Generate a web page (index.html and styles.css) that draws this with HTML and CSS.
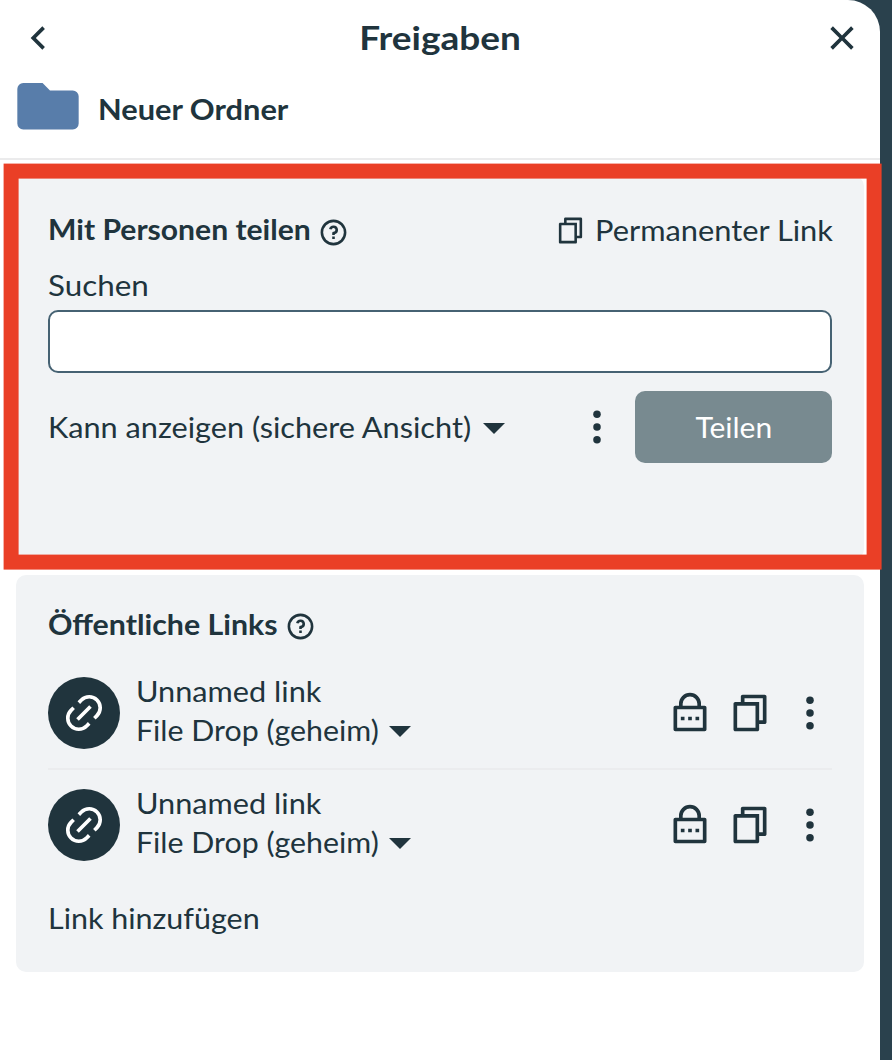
FILE: index.html
```html
<!DOCTYPE html>
<html lang="de">
<head>
<meta charset="utf-8">
<title>Freigaben</title>
<link rel="stylesheet" href="styles.css">
</head>
<body>
<svg class="symbols" aria-hidden="true">
  <symbol id="copy" viewBox="0 0 24 24"><path d="M7 6V3c0-.552.448-1 1-1h12c.552 0 1 .448 1 1v14c0 .552-.448 1-1 1h-3v3c0 .552-.45 1-1.007 1H4.007C3.451 22 3 21.552 3 21l.003-14c0-.552.45-1 1.006-1H7zM5.002 8L5 20h10V8H5.002zM9 6h8v10h2V4H9v2z"/></symbol>
  <symbol id="lock" viewBox="0 0 24 24"><path d="M18 8h2a1 1 0 0 1 1 1v12a1 1 0 0 1-1 1H4a1 1 0 0 1-1-1V9a1 1 0 0 1 1-1h2V7a6 6 0 1 1 12 0v1zM5 10v10h14V10H5zm6 4h2v2h-2v-2zm-4 0h2v2H7v-2zm8 0h2v2h-2v-2zm1-6V7a4 4 0 1 0-8 0v1h8z"/></symbol>
  <symbol id="more" viewBox="0 0 24 24"><circle cx="12" cy="5" r="2.05"/><circle cx="12" cy="12" r="2.05"/><circle cx="12" cy="19" r="2.05"/></symbol>
  <symbol id="help" viewBox="0 0 24 24"><path d="M12 22C6.477 22 2 17.523 2 12S6.477 2 12 2s10 4.477 10 10-4.477 10-10 10zm0-2a8 8 0 1 0 0-16 8 8 0 0 0 0 16zm-1-5h2v2h-2v-2zm2-1.645V14h-2v-1.5a1 1 0 0 1 1-1 1.5 1.5 0 1 0-1.471-1.794l-1.962-.393A3.501 3.501 0 1 1 13 13.355z"/></symbol>
  <symbol id="link" viewBox="0 0 24 24"><path d="M18.364 15.536L16.95 14.12l1.414-1.414a5 5 0 1 0-7.071-7.071L9.879 7.05 8.464 5.636 9.88 4.222a7 7 0 0 1 9.9 9.9l-1.415 1.414zm-2.828 2.828l-1.415 1.414a7 7 0 0 1-9.9-9.9l1.415-1.414L7.05 9.88l-1.414 1.414a5 5 0 1 0 7.071 7.071l1.414-1.414 1.415 1.414zm-.708-10.607l1.415 1.415-7.071 7.07-1.415-1.414 7.071-7.07z"/></symbol>
  <symbol id="back" viewBox="0 0 24 24"><path d="M10.828 12l4.95 4.95-1.414 1.414L8 12l6.364-6.364 1.414 1.414z"/></symbol>
  <symbol id="close" viewBox="0 0 24 24"><path d="M12 10.587l4.95-4.95 1.414 1.414-4.95 4.95 4.95 4.95-1.414 1.414-4.95-4.95-4.95 4.95-1.414-1.414 4.95-4.95-4.95-4.95L7.05 5.637z"/></symbol>
  <symbol id="caret" viewBox="0 0 22 11"><path d="M0 0h22L11 11z"/></symbol>
</svg>
<main class="panel">
  <header class="header">
    <svg class="icon"><use href="#back"/></svg>
    <h1 class="title"><span class="wide t-title">Freigaben</span></h1>
    <svg class="icon"><use href="#close"/></svg>
  </header>
  <div class="resource">
    <svg class="folder" viewBox="0 0 62 47"><path d="M6 0H25.5L33 7.5H56a6 6 0 0 1 6 6V41a6 6 0 0 1-6 6H6a6 6 0 0 1-6-6V6a6 6 0 0 1 6-6z"/></svg>
    <span class="name wide t-name">Neuer Ordner</span>
  </div>

  <section class="card people">
    <div class="card-head">
      <h2 class="heading"><span class="wide t-people">Mit Personen teilen</span><svg class="icon-small"><use href="#help"/></svg></h2>
      <a class="permalink"><svg class="icon-small"><use href="#copy"/></svg><span class="wide t-perma">Permanenter Link</span></a>
    </div>
    <label class="label" for="search"><span class="wide t-search">Suchen</span></label>
    <input class="search" id="search" type="text">
    <div class="share-row">
      <span class="role"><span class="wide t-role">Kann anzeigen (sichere Ansicht)</span><svg class="caret"><use href="#caret"/></svg></span>
      <svg class="icon"><use href="#more"/></svg>
      <button class="share"><span class="wide t-share">Teilen</span></button>
    </div>
  </section>

  <section class="card links">
    <h2 class="heading"><span class="wide t-public">Öffentliche Links</span><svg class="icon-small"><use href="#help"/></svg></h2>
    <ul class="list">
      <li class="item">
        <span class="avatar"><svg class="icon"><use href="#link"/></svg></span>
        <div class="info">
          <span class="wide t-unnamed">Unnamed link</span>
          <span class="role"><span class="wide t-drop">File Drop (geheim)</span><svg class="caret"><use href="#caret"/></svg></span>
        </div>
        <div class="actions"><svg class="icon"><use href="#lock"/></svg><svg class="icon"><use href="#copy"/></svg><svg class="icon"><use href="#more"/></svg></div>
      </li>
      <li class="item">
        <span class="avatar"><svg class="icon"><use href="#link"/></svg></span>
        <div class="info">
          <span class="wide t-unnamed">Unnamed link</span>
          <span class="role"><span class="wide t-drop">File Drop (geheim)</span><svg class="caret"><use href="#caret"/></svg></span>
        </div>
        <div class="actions"><svg class="icon"><use href="#lock"/></svg><svg class="icon"><use href="#copy"/></svg><svg class="icon"><use href="#more"/></svg></div>
      </li>
    </ul>
    <a class="add"><span class="wide t-add">Link hinzufügen</span></a>
  </section>
  <div class="highlight"></div>
</main>
</body>
</html>
```
FILE: styles.css
```css
* { box-sizing: border-box; }
body {
  margin: 0;
  height: 1060px;
  overflow: hidden;
  background: #2a414d;
  color: #20343d;
  font: 28px/38px Lato, "Open Sans", sans-serif;
}
.symbols { display: none; }
svg { display: block; flex: none; fill: currentColor; }
h1, h2, ul { margin: 0; padding: 0; list-style: none; }
span { white-space: nowrap; }

.panel {
  position: relative;
  width: 880px;
  height: 1060px;
  background: #fff;
  border-top-right-radius: 32px;
}
.icon { width: 44px; height: 44px; }
.icon-small { width: 31px; height: 31px; }

/* wide letterforms; the margin makes room for the extra width */
.wide { display: inline-block; transform-origin: 0 50%; }
.t-title { transform: scaleX(1.155); transform-origin: 50% 50%; }
.t-name { transform: scaleX(1.1); }
.t-people { transform: scaleX(1.075); margin-right: 18px; }
.t-perma { transform: scaleX(1.1); margin-right: 21px; }
.t-search { transform: scaleX(1.12); }
.t-role { transform: scaleX(1.096); margin-right: 37px; }
.t-share { transform: scaleX(1.07); transform-origin: 50% 50%; }
.t-public { transform: scaleX(1.083); margin-right: 17px; }
.t-unnamed { transform: scaleX(1.096); align-self: flex-start; }
.t-drop { transform: scaleX(1.083); margin-right: 17px; }
.t-add { transform: scaleX(1.088); }

.header {
  display: flex;
  align-items: center;
  justify-content: space-between;
  height: 76px;
  padding: 0 16px;
}
.title { font-size: 32px; font-weight: 700; }
.resource {
  display: flex;
  align-items: center;
  gap: 19px;
  height: 84px;
  padding: 0 17.4px 20px;
  border-bottom: 2px solid #ebebec;
}
.folder { width: 62px; height: 46.5px; margin-bottom: 1px; fill: #587daa; }
.name { margin-top: 3px; font-weight: 700; }

.card {
  margin: 16px 16px 0;
  padding: 0 32px;
  border-radius: 10px;
  background: #f1f3f5;
}
.people { height: 383px; padding-top: 33px; }
.links { height: 397px; padding-top: 29px; }
.card-head { display: flex; justify-content: space-between; }
.heading {
  display: flex;
  align-items: center;
  height: 40px;
  font-size: 28px;
  font-weight: 700;
}
.heading .icon-small { margin: 6px 0 0 8px; }
.links .heading .icon-small { margin-top: 4px; }
.permalink { display: flex; align-items: center; gap: 9px; height: 41px; }
.permalink .icon-small { margin-top: 1px; }
.label { display: block; height: 38px; margin-top: 16px; }
.search {
  display: block;
  width: 784px;
  height: 63px;
  margin-top: 6px;
  border: 2px solid #466273;
  border-radius: 10px;
  background: #fff;
}
.share-row { display: flex; align-items: center; margin-top: 18px; }
.share-row .role { margin-right: auto; }
.role { display: flex; align-items: center; gap: 12px; }
.caret { width: 22px; height: 11px; margin-top: 3px; }
.info .caret { margin-top: 1px; }
.share {
  width: 197px;
  height: 72px;
  margin-left: 16px;
  padding: 0;
  border: 0;
  border-radius: 10px;
  background: #788a90;
  color: #fff;
  font: inherit;
}

.list { margin-top: 22px; }
.item { display: flex; align-items: center; height: 110px; }
.item:first-child { height: 104px; padding-bottom: 8px; border-bottom: 2px solid #ebecee; }
.avatar {
  display: flex;
  align-items: center;
  justify-content: center;
  width: 72px;
  height: 72px;
  border-radius: 50%;
  background: #20343d;
  color: #fff;
}
.info {
  display: flex;
  flex-direction: column;
  margin: 0 0 4px 16px;
  line-height: 39px;
}
.actions { display: flex; gap: 16px; margin-left: auto; }
.add { display: block; margin-top: 19px; }

/* frame drawn over the people card */
.highlight {
  position: absolute;
  left: 4px;
  top: 164px;
  width: 878px;
  height: 406px;
  border: 15px solid #ea3f26;
  transform: translate(-0.4px, -0.4px);
}
```
